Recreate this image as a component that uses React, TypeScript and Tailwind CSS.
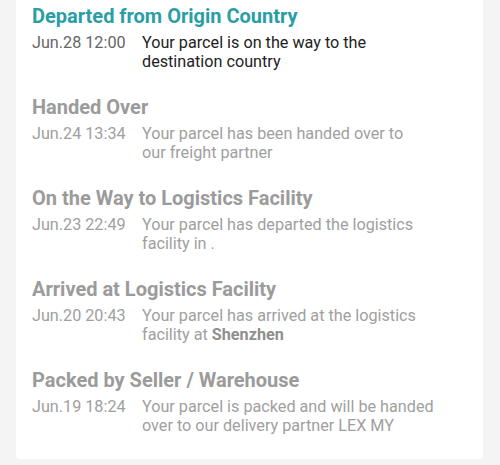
import React from 'react';

type Step = {
    title: string;
    time: string;
    lines: React.ReactNode[];
};

const steps: Step[] = [
    {
        title: 'Departed from Origin Country',
        time: 'Jun.28 12:00',
        lines: ['Your parcel is on the way to the', 'destination country'],
    },
    {
        title: 'Handed Over',
        time: 'Jun.24 13:34',
        lines: ['Your parcel has been handed over to', 'our freight partner'],
    },
    {
        title: 'On the Way to Logistics Facility',
        time: 'Jun.23 22:49',
        lines: ['Your parcel has departed the logistics', 'facility in .'],
    },
    {
        title: 'Arrived at Logistics Facility',
        time: 'Jun.20 20:43',
        lines: [
            'Your parcel has arrived at the logistics',
            <>facility at <span className="font-bold text-[#8f8f8f]">Shenzhen</span></>,
        ],
    },
    {
        title: 'Packed by Seller / Warehouse',
        time: 'Jun.19 18:24',
        lines: ['Your parcel is packed and will be handed', 'over to our delivery partner LEX MY'],
    },
];

export default function App() {
    return (
        <div className="min-h-[465px] w-[500px] bg-[#f4f4f4] font-['Roboto','Liberation_Sans',sans-serif]">
            <div className="ml-4 mr-[17px] rounded-b-[4px] bg-white px-4 pt-[4px] pb-[24px]">
                <div className="flex flex-col gap-[24.5px]">
                    {steps.map((step, i) => {
                        const current = i === 0;
                        return (
                            <div key={step.title}>
                                <div
                                    className={`text-[20px] leading-[24px] font-bold ${
                                        current ? 'text-[#2a9ea5]' : 'text-[#9b9b9b]'
                                    }`}
                                >
                                    {step.title}
                                </div>
                                <div className="mt-[4.5px] flex text-[16.2px] leading-[19px]">
                                    <div className={`w-[110px] shrink-0 ${current ? 'text-[#666666]' : 'text-[#a0a0a0]'}`}>
                                        {step.time}
                                    </div>
                                    <div className={current ? 'text-[#222222]' : 'text-[#a0a0a0]'}>
                                        {step.lines.map((line, j) => (
                                            <div key={j} className="whitespace-nowrap">
                                                {line}
                                            </div>
                                        ))}
                                    </div>
                                </div>
                            </div>
                        );
                    })}
                </div>
            </div>
        </div>
    );
}
